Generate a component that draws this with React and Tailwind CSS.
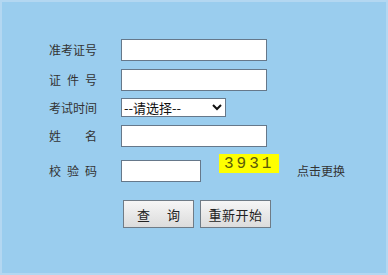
import React from "react";

const font = { fontFamily: '"Noto Sans CJK SC", "Noto Sans", sans-serif' };

function Label({ chars }) {
  return (
    <div className="w-[72px] shrink-0 flex">
      <div className="w-[48px] flex justify-between text-[12px] text-[#333] leading-none">
        {chars.map((c, i) => (
          <span key={i}>{c}</span>
        ))}
      </div>
    </div>
  );
}

export default function App() {
  return (
    <div
      className="w-[388px] h-[275px] bg-[#9acdee] border-2 border-[#b3d7f1] box-border flex flex-col pl-[47px] [font-family:'Noto_Sans_CJK_SC','Noto_Sans',sans-serif]"
      style={font}
    >
      <div className="mt-[37px] h-[22px] flex items-center">
        <Label chars={["准", "考", "证", "号"]} />
        <div className="w-[146px] h-[22px] bg-white border border-[#66788a]" />
      </div>
      <div className="mt-[8px] h-[22px] flex items-center">
        <Label chars={["证", "件", "号"]} />
        <div className="w-[146px] h-[22px] bg-white border border-[#66788a]" />
      </div>
      <div className="mt-[7px] h-[19px] flex items-center">
        <Label chars={["考", "试", "时", "间"]} />
        <div className="w-[105px] h-[19px] bg-white border border-[#66788a] flex items-center pl-[2px] pr-[3px] justify-between">
          <span className="text-[13px] leading-none text-[#111]">--请选择--</span>
          <svg width="10" height="7" viewBox="0 0 10 7">
            <path d="M1 1 L5 5 L9 1" fill="none" stroke="#111" strokeWidth="2" />
          </svg>
        </div>
      </div>
      <div className="mt-[8px] h-[22px] flex items-center">
        <Label chars={["姓", "名"]} />
        <div className="w-[146px] h-[22px] bg-white border border-[#66788a]" />
      </div>
      <div className="mt-[13px] h-[22px] flex items-center">
        <Label chars={["校", "验", "码"]} />
        <div className="w-[80px] h-[22px] bg-white border border-[#66788a]" />
        <div className="ml-[18px] self-start -mt-[6px] w-[60px] h-[19px] bg-[#ffff00] flex items-center pl-[5px]">
          <span className="text-[16px] leading-none tracking-[3px] text-[#5a5a08] [font-family:'Liberation_Mono',monospace]">
            3931
          </span>
        </div>
        <span className="ml-[18px] text-[12px] leading-none text-[#333]">点击更换</span>
      </div>
      <div className="mt-[18px] flex gap-[6px] pl-[74px]">
        <button className="w-[71px] h-[28px] border border-[#6f7b86] bg-gradient-to-b from-[#f6f6f6] to-[#dcdcdc] flex items-center justify-center gap-[17px] text-[13px] text-[#222] leading-none">
          <span>查</span>
          <span>询</span>
        </button>
        <button className="w-[71px] h-[28px] border border-[#6f7b86] bg-gradient-to-b from-[#f6f6f6] to-[#dcdcdc] flex items-center justify-center text-[13px] text-[#222] leading-none tracking-[0.5px]">
          重新开始
        </button>
      </div>
    </div>
  );
}
